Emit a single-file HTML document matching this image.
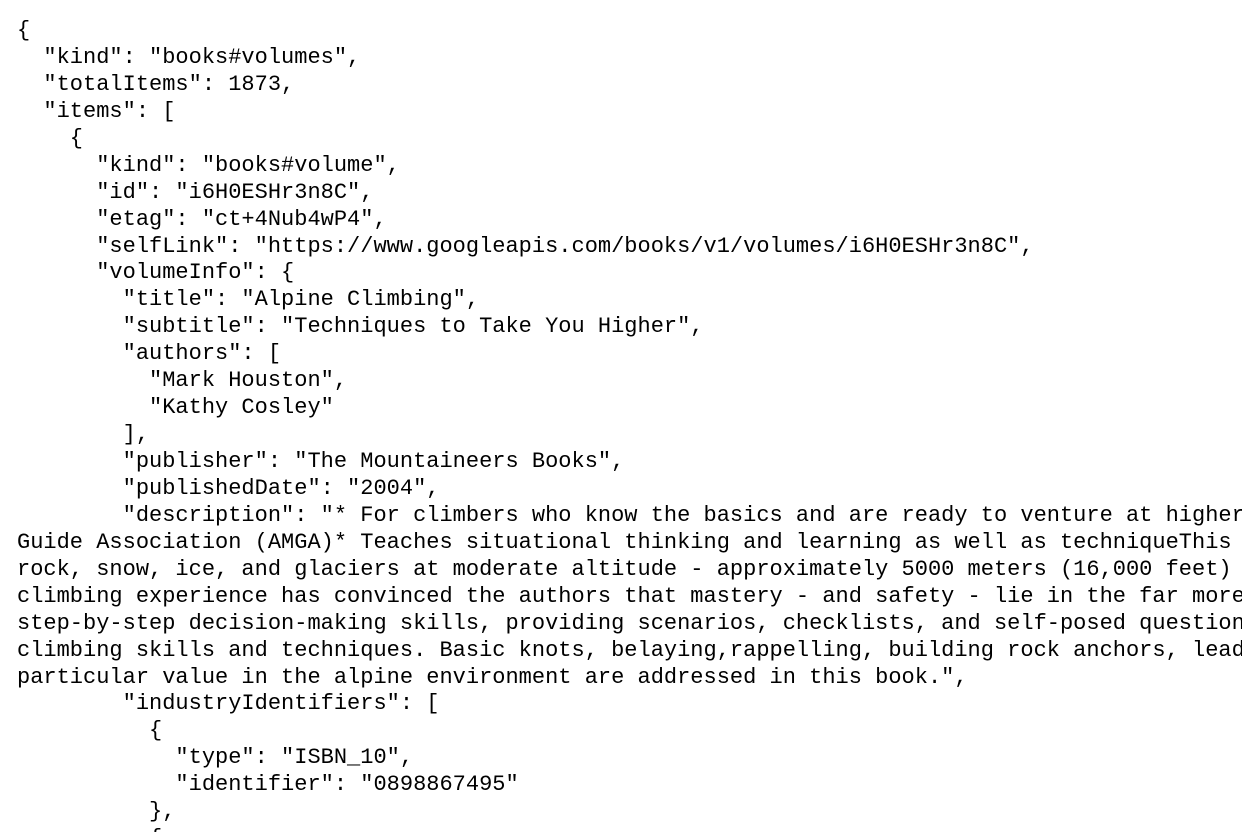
<!DOCTYPE html>
<html><head><meta charset="utf-8"><style>
html,body{margin:0;padding:0;background:#fff;width:1242px;height:832px;overflow:hidden}
pre{margin:0;padding:18px 0 0 17px;font-family:"Liberation Mono","DejaVu Sans Mono",monospace;font-size:22px;line-height:26.93px;color:#000;white-space:pre;overflow:hidden}
</style></head><body><pre>{
  "kind": "books#volumes",
  "totalItems": 1873,
  "items": [
    {
      "kind": "books#volume",
      "id": "i6H0ESHr3n8C",
      "etag": "ct+4Nub4wP4",
      "selfLink": "https://www.googleapis.com/books/v1/volumes/i6H0ESHr3n8C",
      "volumeInfo": {
        "title": "Alpine Climbing",
        "subtitle": "Techniques to Take You Higher",
        "authors": [
          "Mark Houston",
          "Kathy Cosley"
        ],
        "publisher": "The Mountaineers Books",
        "publishedDate": "2004",
        "description": "* For climbers who know the basics and are ready to venture at higher altitudes
Guide Association (AMGA)* Teaches situational thinking and learning as well as techniqueThis book
rock, snow, ice, and glaciers at moderate altitude - approximately 5000 meters (16,000 feet) and
climbing experience has convinced the authors that mastery - and safety - lie in the far more
step-by-step decision-making skills, providing scenarios, checklists, and self-posed questions
climbing skills and techniques. Basic knots, belaying,rappelling, building rock anchors, lead
particular value in the alpine environment are addressed in this book.",
        "industryIdentifiers": [
          {
            "type": "ISBN_10",
            "identifier": "0898867495"
          },
          {
</pre></body></html>
